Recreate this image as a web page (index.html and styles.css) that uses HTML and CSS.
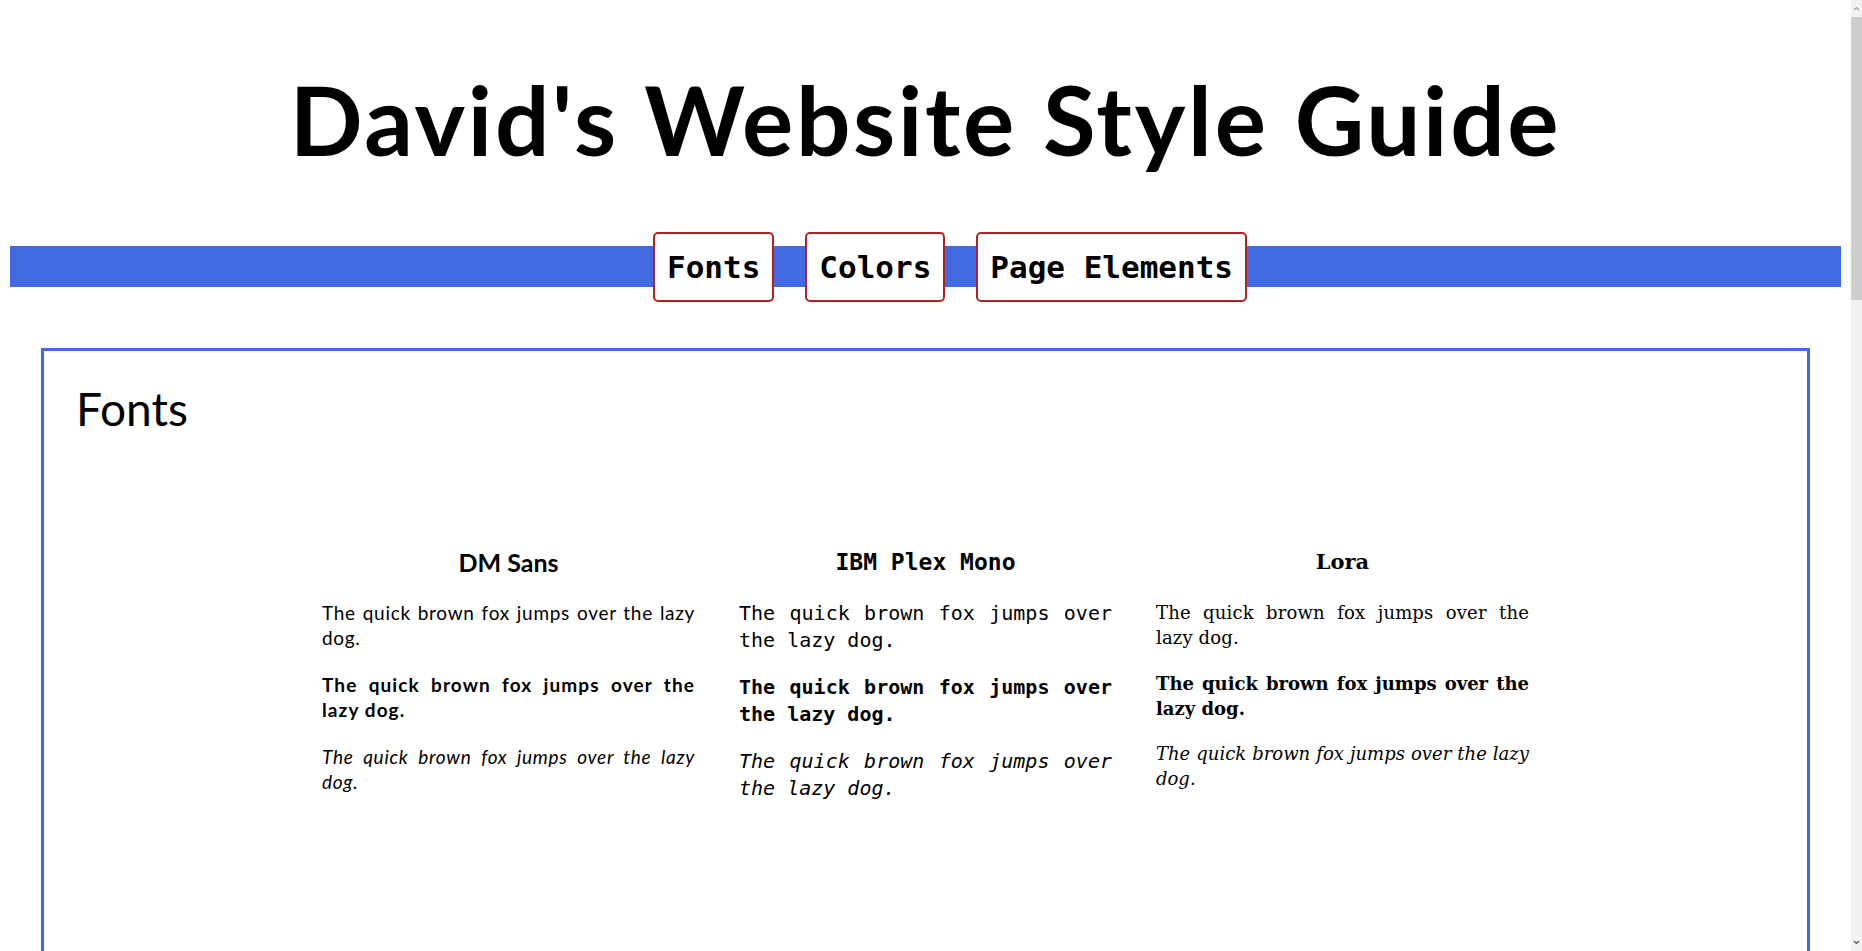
FILE: index.html
```html
<!DOCTYPE html>
<html lang="en">
<head>
<meta charset="utf-8">
<title>David's Website Style Guide</title>
<link rel="stylesheet" href="styles.css">
</head>
<body>
<header class="site-header">
  <h1 class="site-title">David's Website Style Guide</h1>
</header>
<nav class="nav-bar">
  <a class="nav-btn" href="#fonts">Fonts</a>
  <a class="nav-btn" href="#colors">Colors</a>
  <a class="nav-btn" href="#elements">Page Elements</a>
</nav>
<main>
  <section class="panel panel-fonts" id="fonts">
    <h2 class="panel-title">Fonts</h2>
    <div class="font-grid">
      <div class="font-col col-dm">
        <h3 class="font-name">DM Sans</h3>
        <p class="sample sample-regular">The quick brown fox jumps over the lazy dog.</p>
        <p class="sample sample-bold">The quick brown fox jumps over the lazy dog.</p>
        <p class="sample sample-italic">The quick brown fox jumps over the lazy dog.</p>
      </div>
      <div class="font-col col-mono">
        <h3 class="font-name">IBM Plex Mono</h3>
        <p class="sample sample-regular">The quick brown fox jumps over the lazy dog.</p>
        <p class="sample sample-bold">The quick brown fox jumps over the lazy dog.</p>
        <p class="sample sample-italic">The quick brown fox jumps over the lazy dog.</p>
      </div>
      <div class="font-col col-lora">
        <h3 class="font-name">Lora</h3>
        <p class="sample sample-regular">The quick brown fox jumps over the lazy dog.</p>
        <p class="sample sample-bold">The quick brown fox jumps over the lazy dog.</p>
        <p class="sample sample-italic">The quick brown fox jumps over the lazy dog.</p>
      </div>
    </div>
  </section>
  <section class="panel panel-tall" id="colors">
    <h2 class="panel-title">Colors</h2>
  </section>
  <section class="panel panel-tall" id="elements">
    <h2 class="panel-title">Page Elements</h2>
  </section>
</main>
<div class="fake-scrollbar" aria-hidden="true">
  <svg class="sb-arrow" width="11" height="17" viewBox="0 0 11 17"><path d="M3 10 L5.5 7.5 L8 10" fill="none" stroke="#a3a3a3" stroke-width="1.2"/></svg>
  <div class="sb-thumb"></div>
  <div class="sb-track"></div>
  <svg class="sb-arrow" width="11" height="17" viewBox="0 0 11 17"><path d="M3 7 L5.5 9.5 L8 7" fill="none" stroke="#505050" stroke-width="1.2"/></svg>
</div>
</body>
</html>
```

FILE: styles.css
```css
html {
  scrollbar-width: none;
}
html::-webkit-scrollbar {
  display: none;
}

body {
  margin: 0 21px 0 10px;
  background: #ffffff;
  color: #000000;
  font-family: "Lato", "Inter", sans-serif;
}

.site-header {
  padding-top: 71px;
}

.site-title {
  margin: 0;
  font-family: "Lato", sans-serif;
  font-weight: 700;
  font-size: 96px;
  line-height: 1;
  letter-spacing: 2.7px;
  text-align: center;
}

.nav-bar {
  margin-top: 79px;
  height: 41px;
  background: #4169e1;
  display: flex;
  align-items: center;
  justify-content: center;
  gap: 31px;
  padding-left: 49px;
}

.nav-btn {
  display: block;
  height: 66px;
  line-height: 66px;
  padding: 0 12px;
  border: 2px solid #b22222;
  border-radius: 5px;
  background: #ffffff;
  color: #000000;
  text-decoration: none;
  font-family: "DejaVu Sans Mono", monospace;
  font-weight: 700;
  font-size: 31px;
  flex: none;
}

.panel {
  margin: 61px 31px 0;
  border: 3px solid #4169e1;
  padding: 32px 32px 220px;
}

.panel-tall {
  min-height: 700px;
}

.panel-title {
  margin: 1px 0 0;
  font-family: "Lato", sans-serif;
  font-weight: 400;
  font-size: 46px;
  line-height: 50px;
}

.font-grid {
  margin-top: 113px;
  display: grid;
  grid-template-columns: repeat(3, 373px);
  column-gap: 44px;
  justify-content: center;
}

.font-name {
  margin: 0 0 23px;
  font-size: 24px;
  line-height: 30px;
  font-weight: 700;
  text-align: center;
}

.sample {
  margin: 0 0 22px;
  text-align: justify;
}

.sample-bold {
  font-weight: 700;
}

.sample-italic {
  font-style: italic;
}

.col-dm {
  font-family: "Lato", sans-serif;
}
.col-dm .font-name {
  font-size: 25px;
}
.col-dm .sample {
  font-size: 19px;
  line-height: 25px;
  margin-bottom: 22px;
  letter-spacing: 0.7px;
}
.col-dm .sample-bold {
  letter-spacing: 1.1px;
}

.col-mono {
  font-family: "DejaVu Sans Mono", monospace;
}
.col-mono .font-name {
  font-size: 23px;
}
.col-mono .sample {
  font-size: 20px;
  line-height: 26.7px;
  margin-bottom: 20.6px;
}

.col-lora {
  font-family: "DejaVu Serif", serif;
}
.col-lora .font-name {
  font-size: 21px;
}
.col-lora .sample {
  font-size: 18px;
  line-height: 25px;
  margin-bottom: 20.5px;
}
.col-lora .sample-regular {
  letter-spacing: 0.15px;
}

.fake-scrollbar {
  position: fixed;
  top: 0;
  right: 0;
  width: 11px;
  height: 100vh;
  background: #f1f1f1;
  display: flex;
  flex-direction: column;
}
.sb-arrow {
  display: block;
  flex: none;
}
.sb-thumb {
  flex: none;
  height: 283px;
  background: #cdcdcd;
}
.sb-track {
  flex: 1;
}
```
